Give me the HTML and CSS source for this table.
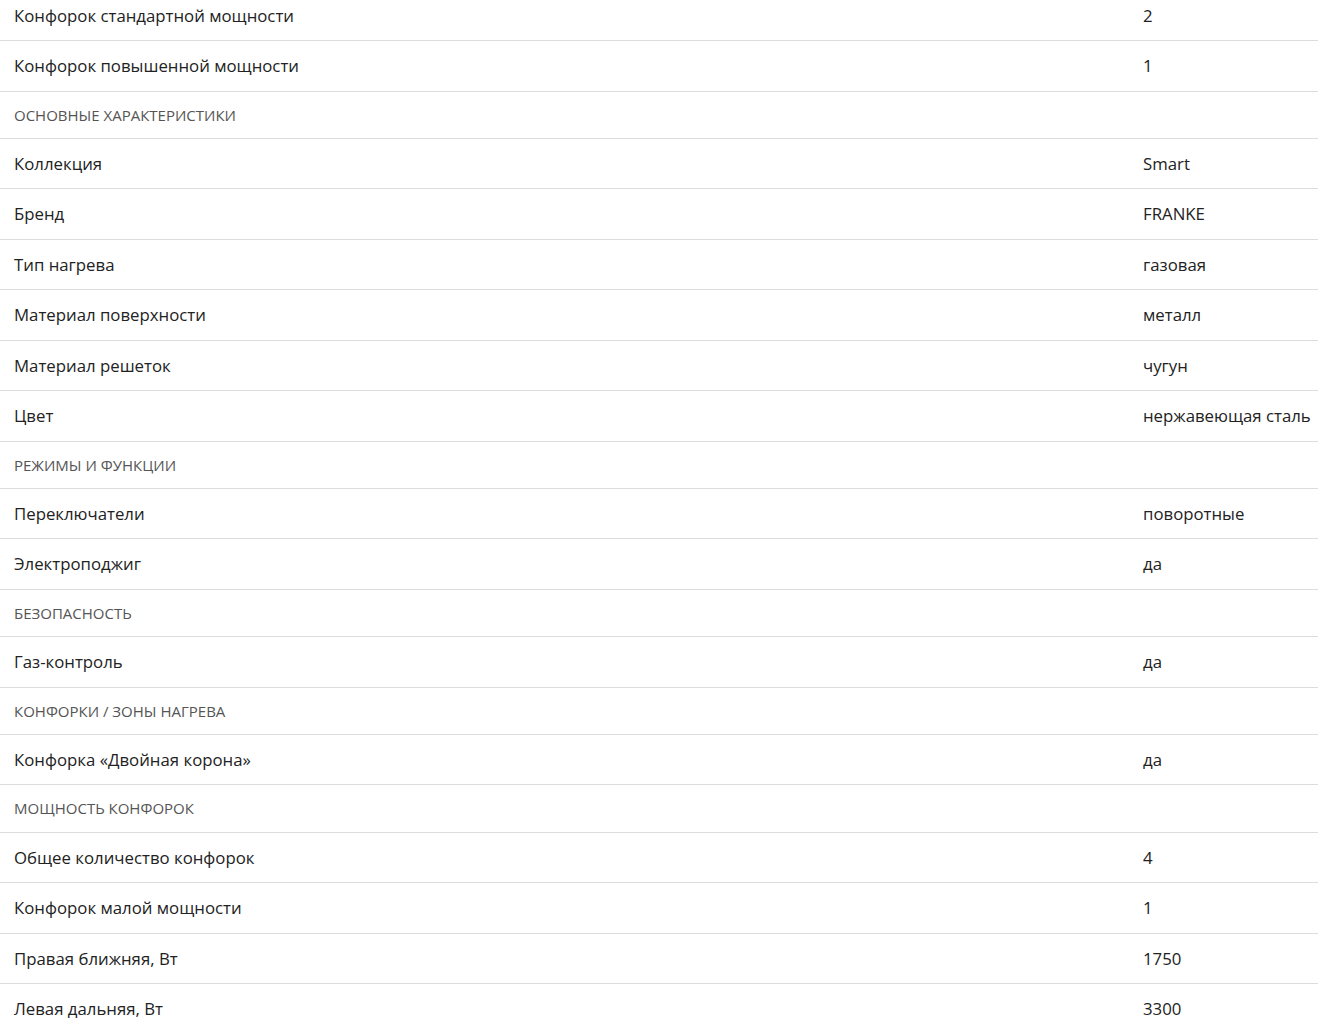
FILE: index.html
```html
<!DOCTYPE html>
<html>
  <head>
    <title>Характеристики</title>
    <link rel="stylesheet" href="styles.css">
  </head>
  <body>
    <table class="specs">
      <colgroup>
        <col class="col-name">
        <col class="col-value">
      </colgroup>
      <tbody>
        <tr><td>Конфорок стандартной мощности</td><td>2</td></tr>
        <tr><td>Конфорок повышенной мощности</td><td>1</td></tr>
        <tr class="group"><td>Основные характеристики</td><td></td></tr>
        <tr><td>Коллекция</td><td>Smart</td></tr>
        <tr><td>Бренд</td><td>FRANKE</td></tr>
        <tr><td>Тип нагрева</td><td>газовая</td></tr>
        <tr><td>Материал поверхности</td><td>металл</td></tr>
        <tr><td>Материал решеток</td><td>чугун</td></tr>
        <tr><td>Цвет</td><td>нержавеющая сталь</td></tr>
        <tr class="group"><td>Режимы и функции</td><td></td></tr>
        <tr><td>Переключатели</td><td>поворотные</td></tr>
        <tr><td>Электроподжиг</td><td>да</td></tr>
        <tr class="group"><td>Безопасность</td><td></td></tr>
        <tr><td>Газ-контроль</td><td>да</td></tr>
        <tr class="group"><td>Конфорки / зоны нагрева</td><td></td></tr>
        <tr><td>Конфорка «Двойная корона»</td><td>да</td></tr>
        <tr class="group"><td>Мощность конфорок</td><td></td></tr>
        <tr><td>Общее количество конфорок</td><td>4</td></tr>
        <tr><td>Конфорок малой мощности</td><td>1</td></tr>
        <tr><td>Правая ближняя, Вт</td><td>1750</td></tr>
        <tr><td>Левая дальняя, Вт</td><td>3300</td></tr>
      </tbody>
    </table>
  </body>
</html>
```

FILE: styles.css
```css
body {
  margin: 0;
  background: #fff;
  font-family: "Open Sans", "Noto Sans", sans-serif;
  color: #222;
  overflow: hidden;
}

.specs {
  width: 100%;
  margin-top: -9.5px;
  border-collapse: collapse;
  table-layout: fixed;
}

.col-name {
  width: 1129px;
}

.specs td {
  padding: 13px 0 13px 14px;
  font-size: 16.8px;
  line-height: 23.5px;
  border-bottom: 1px solid #ddd;
  white-space: nowrap;
  text-align: left;
}

.specs tr.group td {
  font-size: 15px;
  line-height: 20.2px;
  color: #555;
  text-transform: uppercase;
}
```
